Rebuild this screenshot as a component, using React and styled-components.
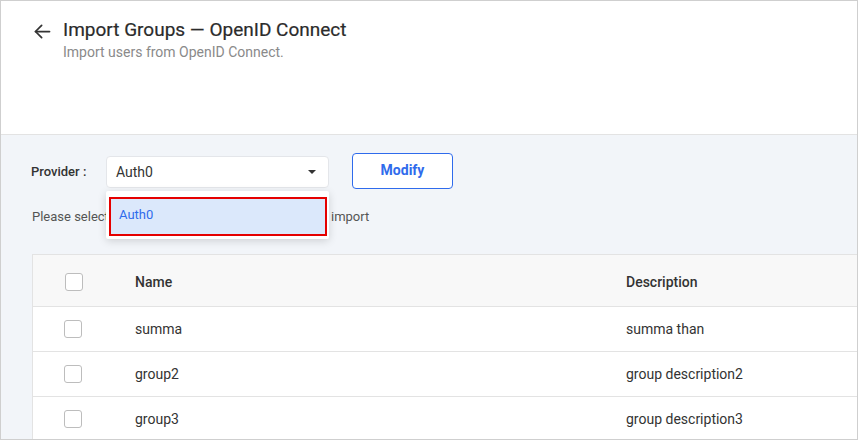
import React from "react";
import styled, { createGlobalStyle } from "styled-components";

const GlobalStyle = createGlobalStyle`
  html, body {
    margin: 0;
    padding: 0;
    font-family: Roboto, "Liberation Sans", sans-serif;
    color: #333;
  }
  * { box-sizing: border-box; }
`;

const COLORS = {
  BLUE: "#2f6bec",
  TEXT: "#333333",
  MUTED: "#8a8a8a",
  LINE: "#e3e3e3",
  BODY: "#f2f5f9",
};

const Page = styled.div`
  width: 858px;
  height: 440px;
  border: 1px solid #cfcfcf;
  overflow: hidden;
  display: flex;
  flex-direction: column;
  background: #fff;
`;

const Header = styled.header`
  height: 134px;
  flex-shrink: 0;
  display: flex;
  align-items: flex-start;
  gap: 10px;
  padding: 17px 0 0 31px;
  border-bottom: 1px solid ${COLORS.LINE};

  .header__back {
    width: 21px;
    height: 21px;
    margin-top: 3px;
  }
`;

const TitleBlock = styled.div`
  display: flex;
  flex-direction: column;
`;

const Title = styled.h1`
  margin: 0;
  font-size: 19px;
  font-weight: 400;
  line-height: 24px;
  color: #2b2b2b;
  -webkit-text-stroke: 0.2px #2b2b2b;
`;

const Subtitle = styled.p`
  margin: 1px 0 0;
  font-size: 14px;
  line-height: 18px;
  color: ${COLORS.MUTED};
`;

const Body = styled.main`
  flex: 1;
  background: ${COLORS.BODY};
  padding: 18px 0 0 30px;
  display: flex;
  flex-direction: column;
`;

const ProviderRow = styled.div`
  display: flex;
  align-items: center;
  height: 36px;
`;

const Label = styled.span`
  font-size: 13px;
  font-weight: 500;
  width: 75px;
  color: ${COLORS.TEXT};
`;

const SelectWrap = styled.div`
  position: relative;
  width: 223px;
  padding-top: 2px;
`;

const SelectBox = styled.div`
  height: 32px;
  background: #fff;
  border: 1px solid #e4e6ea;
  border-radius: 4px;
  display: flex;
  align-items: center;
  justify-content: space-between;
  padding: 0 12px 0 9px;
  font-size: 14px;
  color: ${COLORS.TEXT};
`;

const Caret = styled.span`
  width: 0;
  height: 0;
  border-left: 4px solid transparent;
  border-right: 4px solid transparent;
  border-top: 4px solid #333;
`;

const Menu = styled.ul`
  position: absolute;
  top: 37px;
  left: 0;
  right: 0;
  margin: 0;
  padding: 6px 2px 3px 3px;
  list-style: none;
  background: #fff;
  border-radius: 2px;
  box-shadow: 0 2px 8px rgba(0, 0, 0, 0.15);
  z-index: 2;
`;

const MenuItem = styled.li`
  height: 39px;
  display: flex;
  align-items: center;
  padding-left: 8px;
  padding-bottom: 5px;
  font-size: 13px;
  color: ${({ $active }) => ($active ? COLORS.BLUE : COLORS.TEXT)};
  background: ${({ $active }) => ($active ? "#dbe8fb" : "transparent")};
  border: 2px solid ${({ $highlight }) => ($highlight ? "#e50000" : "transparent")};
`;

const Button = styled.button`
  margin-left: 23px;
  width: 101px;
  height: 36px;
  background: #fff;
  border: 1px solid ${COLORS.BLUE};
  border-radius: 4px;
  color: ${COLORS.BLUE};
  font-family: inherit;
  font-size: 14px;
  font-weight: 700;
  padding: 0 0 3px;
`;

const Hint = styled.p`
  margin: 18px 0 0 1px;
  font-size: 13px;
  line-height: 20px;
  color: #555;
`;

const Table = styled.div`
  margin-top: 27px;
  margin-left: 1px;
  background: #fff;
  border-top: 1px solid ${COLORS.LINE};
  border-left: 1px solid ${COLORS.LINE};
  flex: 1;
`;

const Row = styled.div`
  display: grid;
  grid-template-columns: 102px 491px 1fr;
  align-items: center;
  height: ${({ $head }) => ($head ? "52px" : "45px")};
  background: ${({ $head }) => ($head ? "#f8f8f8" : "#fff")};
  border-bottom: 1px solid ${COLORS.LINE};
  font-size: 14px;
  font-weight: ${({ $head }) => ($head ? 500 : 400)};
  color: ${COLORS.TEXT};
  padding-top: ${({ $head }) => ($head ? "2px" : "0")};
`;

const CheckCell = styled.div`
  padding-left: ${({ $head }) => ($head ? "32px" : "31px")};
  display: flex;
`;

const Checkbox = styled.span`
  width: 18px;
  height: 18px;
  border: 1px solid #bdbdbd;
  border-radius: 3px;
  background: #fff;
`;

const groups = [
  { name: "summa", description: "summa than" },
  { name: "group2", description: "group description2" },
  { name: "group3", description: "group description3" },
];

export default function App() {
  return (
    <>
      <GlobalStyle />
      <Page>
        <Header>
          <svg className="header__back" viewBox="0 0 24 24" fill="none" stroke="#333" strokeWidth="2" strokeLinecap="round" strokeLinejoin="round">
            <path d="M20 12H4" />
            <path d="M11 5l-7 7 7 7" />
          </svg>
          <TitleBlock>
            <Title>Import Groups — OpenID Connect</Title>
            <Subtitle>Import users from OpenID Connect.</Subtitle>
          </TitleBlock>
        </Header>
        <Body>
          <ProviderRow>
            <Label>Provider :</Label>
            <SelectWrap>
              <SelectBox>
                Auth0
                <Caret />
              </SelectBox>
              <Menu>
                <MenuItem $active $highlight>Auth0</MenuItem>
              </Menu>
            </SelectWrap>
            <Button>Modify</Button>
          </ProviderRow>
          <Hint>Please select the user groups that you would like to import</Hint>
          <Table>
            <Row $head>
              <CheckCell $head><Checkbox /></CheckCell>
              <span>Name</span>
              <span>Description</span>
            </Row>
            {groups.map((g) => (
              <Row key={g.name}>
                <CheckCell><Checkbox /></CheckCell>
                <span>{g.name}</span>
                <span>{g.description}</span>
              </Row>
            ))}
          </Table>
        </Body>
      </Page>
    </>
  );
}
